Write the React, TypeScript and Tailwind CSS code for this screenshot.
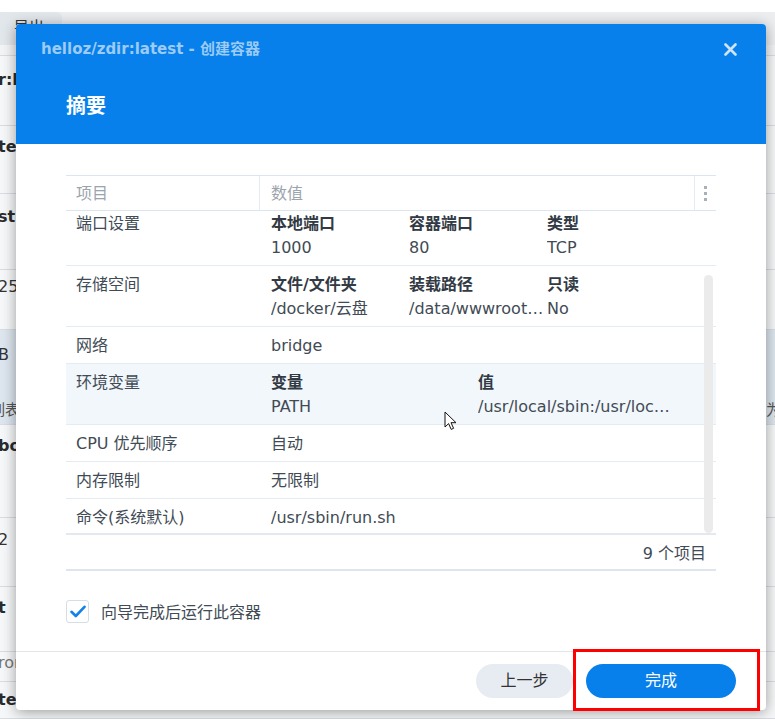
import React from "react";

const FONT = "font-['DejaVu_Sans','Noto_Sans_CJK_SC',sans-serif]";

type Cell = [string, string];
type Row = {
  label: string;
  value?: string;
  cols?: Cell[];
  colWidth?: string;
  highlight?: boolean;
};

const ROWS: Row[] = [
  {
    label: "端口设置",
    cols: [
      ["本地端口", "1000"],
      ["容器端口", "80"],
      ["类型", "TCP"],
    ],
    colWidth: "w-[138px]",
  },
  {
    label: "存储空间",
    cols: [
      ["文件/文件夹", "/docker/云盘"],
      ["装载路径", "/data/wwwroot/zdir/data"],
      ["只读", "No"],
    ],
    colWidth: "w-[138px]",
  },
  { label: "网络", value: "bridge" },
  {
    label: "环境变量",
    cols: [
      ["变量", "PATH"],
      ["值", "/usr/local/sbin:/usr/local/bin:/usr/sbin:/usr/bin:/sbin:/bin"],
    ],
    colWidth: "w-[207px] pr-[6px]",
    highlight: true,
  },
  { label: "CPU 优先顺序", value: "自动" },
  { label: "内存限制", value: "无限制" },
  { label: "命令(系统默认)", value: "/usr/sbin/run.sh" },
];

// list rows of the page behind the dialog
const BG_ROWS = [
  { h: "h-[11px]", left: "", right: "", bg: "bg-[#f3f4f5]" },
  { h: "h-[70px]", left: "r:l", bold: true, pt: "pt-[13px]" },
  { h: "h-[68px]", left: "te", bold: true, pt: "pt-[10px]" },
  { h: "h-[76px]", left: "st", bold: true, pt: "pt-[12px]" },
  { h: "h-[60px]", left: "25", pt: "pt-[6px]" },
  { h: "h-[95px]", left: "B", sub: "列表", right: "为", pt: "pt-[14px]", bg: "bg-[#dde5ee]" },
  { h: "h-[93px]", left: "bo", bold: true, pt: "pt-[10px]" },
  { h: "h-[69px]", left: "2", pt: "pt-[11px]" },
  { h: "h-[65px]", left: "t", bold: true, pt: "pt-[10px]" },
  { h: "h-[30px]", left: "ron", gray: true, pt: "pt-0" },
  { h: "h-[37px]", left: "te", bold: true, pt: "pt-[7px]" },
];

function Background() {
  return (
    <div className="flex flex-col">
      <div className="h-[12px] bg-white" />
      <div className="flex h-[33px] items-start bg-[#eceef0]">
        <div className="flex h-[33px] w-[62px] items-start rounded-tr-[6px] bg-[#e2e7eb] pl-[14px] pt-[4px] text-[15px] text-[#333]">
          导出
        </div>
      </div>
      {BG_ROWS.map((r, i) => (
        <div
          key={i}
          className={`flex shrink-0 flex-col border-b border-[#d9dde2] ${r.h} ${r.bg ?? "bg-[#f6f7f8]"} ${r.pt ?? ""}`}
        >
          <div className="flex items-center justify-between leading-[22px]">
            <span
              className={`-ml-[2px] whitespace-nowrap text-[16px] ${r.bold ? "font-bold text-[#2b2b2b]" : r.gray ? "text-[#777]" : "text-[#333]"}`}
            >
              {r.left}
            </span>
          </div>
          {r.sub && (
            <div className="mt-[33px] flex items-center justify-between leading-[22px]">
              <span className="-ml-[10px] text-[15px] text-[#555]">{r.sub}</span>
              <span className="w-[9px] overflow-hidden whitespace-nowrap text-[15px] text-[#555]">{r.right}</span>
            </div>
          )}
        </div>
      ))}
    </div>
  );
}

function CheckIcon() {
  return (
    <svg width="16" height="13" viewBox="0 0 16 13" fill="none">
      <path d="M1.5 6.8 L5.8 11 L14.5 1.8" stroke="#1580e8" strokeWidth="2.6" strokeLinecap="round" strokeLinejoin="round" />
    </svg>
  );
}

function CloseIcon() {
  return (
    <svg width="13" height="13" viewBox="0 0 13 13">
      <path d="M1.5 1.5 L11.5 11.5 M11.5 1.5 L1.5 11.5" stroke="#cfe4fa" strokeWidth="2.6" strokeLinecap="round" />
    </svg>
  );
}

function Cursor() {
  return (
    <svg width="14" height="20" viewBox="0 0 14 20">
      <path
        d="M1 1 L1 16 L4.6 12.6 L7.2 18.4 L9.6 17.3 L7 11.7 L12 11.7 Z"
        fill="#fff"
        stroke="#111"
        strokeWidth="1"
        strokeLinejoin="round"
      />
    </svg>
  );
}

function SummaryRow({ row }: { row: Row }) {
  return (
    <div
      className={`flex border-b border-[#e4ebf2] pb-[5px] pt-[7px] leading-[24px] ${row.highlight ? "bg-[#f2f7fc]" : "bg-white"}`}
    >
      <div className="w-[194px] shrink-0 pl-[10px] text-[#414b55]">{row.label}</div>
      <div className="flex min-w-0 flex-1 pl-[11px]">
        {row.cols ? (
          row.cols.map(([head, val]) => (
            <div key={head} className={`${row.colWidth} shrink-0`}>
              <div className="font-bold text-[#323a44]">{head}</div>
              <div className="truncate text-[#414b55]">{val}</div>
            </div>
          ))
        ) : (
          <div className="text-[#414b55]">{row.value}</div>
        )}
      </div>
    </div>
  );
}

function SummaryTable() {
  return (
    <div className="text-[16px]">
      {/* column header */}
      <div className="flex h-[36px] border-y border-[#dae5f0] text-[#9ba4ad]">
        <div className="flex w-[194px] items-center border-r border-[#e4ebf2] pl-[10px] pt-[1px]">项目</div>
        <div className="flex flex-1 items-center border-r border-[#e4ebf2] pl-[11px] pt-[1px]">数值</div>
        <div className="flex w-[21px] flex-col items-center justify-center gap-[3px]">
          <span className="h-[3px] w-[3px] bg-[#a9b0b8]" />
          <span className="h-[3px] w-[3px] bg-[#a9b0b8]" />
          <span className="h-[3px] w-[3px] bg-[#a9b0b8]" />
        </div>
      </div>

      {/* rows, scrolled a few pixels */}
      <div className="relative h-[322px] overflow-hidden">
        <div className="-mt-[6px]">
          {ROWS.map((r) => (
            <SummaryRow key={r.label} row={r} />
          ))}
        </div>
        <div className="absolute right-[3px] top-[64px] h-[258px] w-[9px] rounded-full bg-[#ebebeb]" />
      </div>

      {/* item count */}
      <div className="flex h-[38px] items-center justify-end border-y-2 border-t-[#e4e9ef] border-b-[#dfe5ec] pr-[10px] pt-[3px] text-[#414b55]">
        9 个项目
      </div>
    </div>
  );
}

export default function App() {
  return (
    <div className={`relative h-[719px] w-[775px] overflow-hidden bg-white ${FONT}`}>
      <Background />

      {/* dialog */}
      <div className="absolute left-[16px] top-[24px] flex h-[686px] w-[750px] flex-col overflow-hidden rounded-[4px] bg-white shadow-[0_2px_14px_rgba(0,0,0,0.38)]">
        <div className="flex h-[120px] shrink-0 flex-col bg-[#0780eb] px-[25px]">
          <div className="flex items-center justify-between pt-[15px] leading-[20px]">
            <span className="text-[15px] font-bold text-[#9ccbf6]">helloz/zdir:latest - 创建容器</span>
            <span className="mr-[4px] flex">
              <CloseIcon />
            </span>
          </div>
          <div className="mt-[33px] pl-[25px] text-[20px] font-bold leading-[28px] text-white">摘要</div>
        </div>

        <div className="px-[50px] pt-[31px]">
          <SummaryTable />

          <label className="mt-[29px] flex h-[23px] items-center gap-[12px]">
            <span className="flex h-[23px] w-[23px] items-center justify-center rounded-[3px] border border-[#d5dde6] bg-white">
              <CheckIcon />
            </span>
            <span className="pt-[2px] text-[16px] text-[#414b55]">向导完成后运行此容器</span>
          </label>
        </div>

        <div className="mt-[28px] flex flex-1 items-start justify-end gap-[13px] border-t border-[#e2e6ea] px-[30px] pt-[12px]">
          <button className="h-[34px] w-[97px] rounded-full bg-[#e7ecf3] text-[16px] text-[#333]">上一步</button>
          <button className="h-[34px] w-[150px] rounded-full bg-[#0780eb] text-[16px] text-white">完成</button>
        </div>
      </div>

      {/* pointer */}
      <div className="absolute left-[444px] top-[411px]">
        <Cursor />
      </div>

      {/* highlight frame */}
      <div className="absolute left-[573px] top-[649px] h-[62px] w-[187px] border-[3px] border-[#ff0000]" />
    </div>
  );
}
